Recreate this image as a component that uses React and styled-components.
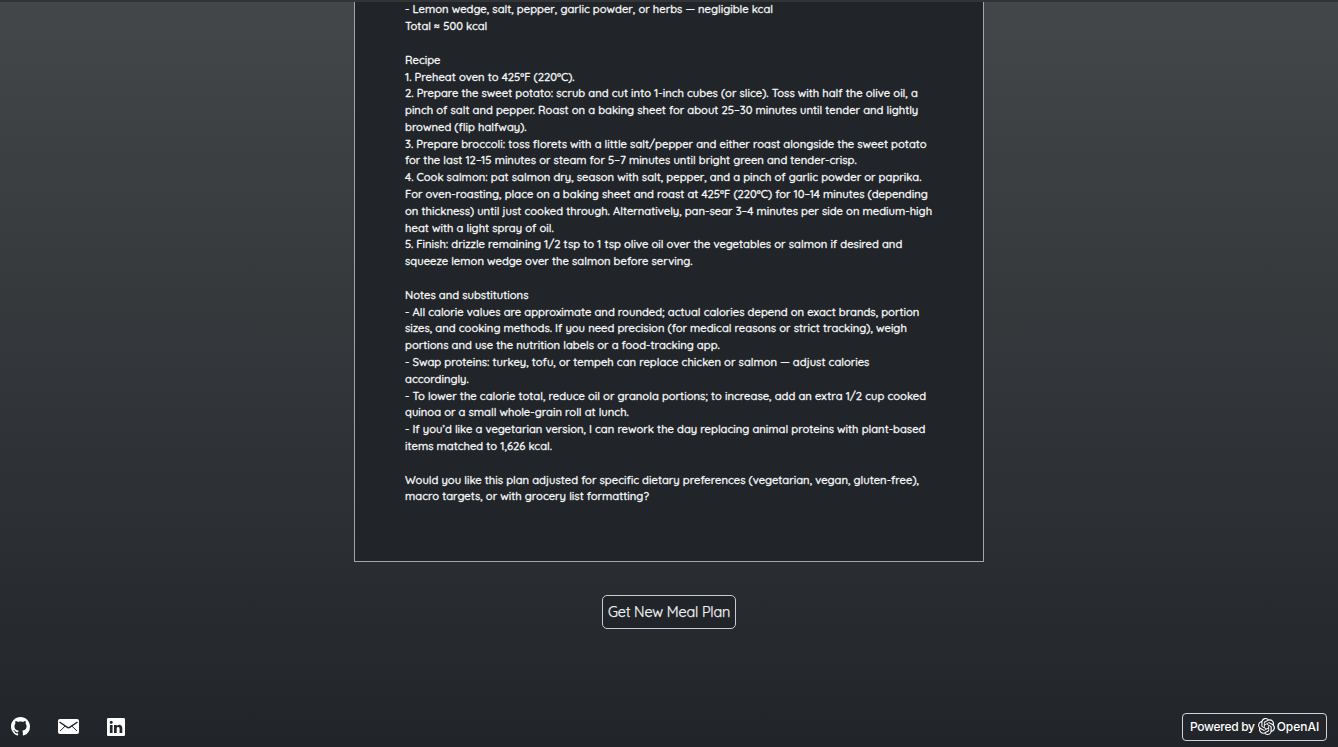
import React from "react";
import styled, { createGlobalStyle } from "styled-components";
import { BsGithub, BsLinkedin } from "react-icons/bs";
import { SiOpenai } from "react-icons/si";

const GlobalStyle = createGlobalStyle`
  * { box-sizing: border-box; }
  body { margin: 0; background: #212429; overflow: hidden; }
`;

const Page = styled.div`
  display: flex;
  flex-direction: column;
  align-items: center;
  height: 747px;
  overflow: hidden;
  border-top: 2px solid #333435;
  background: linear-gradient(#444749, #212429);
  color: #f4f5f6;
  font-family: Quicksand, Lato, sans-serif;
`;

const Plan = styled.main`
  width: 630px;
  height: 560px;
  flex: none;
  padding: 0 50px;
  border: 1px solid #a3a6a8;
  border-top: 0;
  background: #212529;
`;

const Text = styled.div`
  margin-top: -0.7px;
  line-height: 16.8px;
  font-size: 11.21px;
  font-weight: 500;
  -webkit-text-stroke: 0.3px currentColor;
  white-space: pre;
`;

const PlanButton = styled.button`
  width: 134px;
  height: 34px;
  flex: none;
  margin: 33px 0 0;
  padding: 0;
  border: 1px solid #c9cbcc;
  border-radius: 5px;
  background: #212529;
  color: #f1f2f3;
  font: 400 14.4px Quicksand, Lato, sans-serif;
  letter-spacing: -0.18px;
  -webkit-text-stroke: 0.25px currentColor;
  white-space: nowrap;
`;

const Footer = styled.footer`
  display: flex;
  align-items: center;
  justify-content: space-between;
  align-self: stretch;
  margin-top: 84px;
  padding: 0 11px;
`;

const Links = styled.nav`
  display: flex;
  align-items: center;
  gap: 28px;
  padding-bottom: 1px;
`;

const IconLink = styled.a`
  display: flex;
  color: #fff;
`;

const Powered = styled.div`
  display: flex;
  align-items: center;
  width: 145px;
  height: 28px;
  padding: 0 0 1px 7px;
  border: 1px solid #d2d4d5;
  border-radius: 4px;
  color: #fff;
  font: 500 12px Inter, sans-serif;
  white-space: nowrap;
  svg { margin: 0 2px 0 3px; }
`;

const PoweredLabel = styled.span`
  letter-spacing: -0.3px;
`;

function MailIcon() {
  return (
    <svg width="21" height="15" viewBox="0 0 21 15" fill="none">
      <rect width="21" height="15" rx="2" fill="#fff" />
      <path d="M1.5 3 L9 8.2 Q10.5 9.2 12 8.2 L19.5 3" stroke="#212529" strokeWidth="1.4" />
      <path d="M7 7.2 L2 12 M14 7.2 L19 12" stroke="#212529" strokeWidth="1" />
    </svg>
  );
}

const plan = `- Lemon wedge, salt, pepper, garlic powder, or herbs — negligible kcal
Total ≈ 500 kcal

Recipe
1. Preheat oven to 425°F (220°C).
2. Prepare the sweet potato: scrub and cut into 1-inch cubes (or slice). Toss with half the olive oil, a
pinch of salt and pepper. Roast on a baking sheet for about 25–30 minutes until tender and lightly
browned (flip halfway).
3. Prepare broccoli: toss florets with a little salt/pepper and either roast alongside the sweet potato
for the last 12–15 minutes or steam for 5–7 minutes until bright green and tender-crisp.
4. Cook salmon: pat salmon dry, season with salt, pepper, and a pinch of garlic powder or paprika.
For oven-roasting, place on a baking sheet and roast at 425°F (220°C) for 10–14 minutes (depending
on thickness) until just cooked through. Alternatively, pan-sear 3–4 minutes per side on medium-high
heat with a light spray of oil.
5. Finish: drizzle remaining 1/2 tsp to 1 tsp olive oil over the vegetables or salmon if desired and
squeeze lemon wedge over the salmon before serving.

Notes and substitutions
- All calorie values are approximate and rounded; actual calories depend on exact brands, portion
sizes, and cooking methods. If you need precision (for medical reasons or strict tracking), weigh
portions and use the nutrition labels or a food-tracking app.
- Swap proteins: turkey, tofu, or tempeh can replace chicken or salmon — adjust calories
accordingly.
- To lower the calorie total, reduce oil or granola portions; to increase, add an extra 1/2 cup cooked
quinoa or a small whole-grain roll at lunch.
- If you’d like a vegetarian version, I can rework the day replacing animal proteins with plant-based
items matched to 1,626 kcal.

Would you like this plan adjusted for specific dietary preferences (vegetarian, vegan, gluten-free),
macro targets, or with grocery list formatting?`;

export default function App() {
  return (
    <>
      <GlobalStyle />
      <Page>
        <Plan>
          <Text>{plan}</Text>
        </Plan>
        <PlanButton>Get New Meal Plan</PlanButton>
        <Footer>
          <Links>
            <IconLink><BsGithub size={19} /></IconLink>
            <IconLink><MailIcon /></IconLink>
            <IconLink><BsLinkedin size={18} /></IconLink>
          </Links>
          <Powered>
            <PoweredLabel>Powered by</PoweredLabel>
            <SiOpenai size={17} />
            OpenAI
          </Powered>
        </Footer>
      </Page>
    </>
  );
}
